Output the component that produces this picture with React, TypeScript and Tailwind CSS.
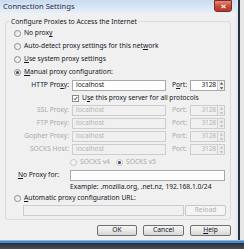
import React from 'react'

const txt = 'text-[#141424]'
const dis = 'text-[#a8a8a8]'

function Radio({ checked = false, disabled = false }: { checked?: boolean; disabled?: boolean }) {
  return (
    <span
      className={`flex items-center justify-center w-[7px] h-[7px] rounded-full border shrink-0 ${
        disabled ? 'border-[#c4c4c4] bg-[#f4f4f4]' : 'border-[#8c8c8c] bg-gradient-to-br from-[#e4e4e4] to-[#fafafa]'
      }`}
    >
      {checked && <span className="w-[3px] h-[3px] rounded-full bg-[#2d4b6a]" />}
    </span>
  )
}

function Input({ value, disabled = false, w }: { value?: string; disabled?: boolean; w: string }) {
  return (
    <div
      className={`${w} h-[11px] border flex items-center px-[3px] ${
        disabled ? 'border-[#cdcdcd] bg-[#f0f0f0] text-[#b4b4b4]' : 'border-[#a8a8a8] bg-white ' + txt
      }`}
    >
      {value}
    </div>
  )
}

function PortInput({ disabled = false }: { disabled?: boolean }) {
  return (
    <div
      className={`w-[35px] h-[11px] border flex items-center ${
        disabled ? 'border-[#cdcdcd] bg-[#f0f0f0] text-[#b4b4b4]' : 'border-[#a8a8a8] bg-white ' + txt
      }`}
    >
      <span className="flex-1 text-right pr-[1px] tracking-[-0.2px]">3128</span>
      <div className="w-[7px] h-full flex flex-col border-l border-[#d0d0d0] bg-[#ececec]">
        <svg viewBox="0 0 6 4" className="w-[7px] h-[4.5px]">
          <path d="M1.5 3 L3 1.2 L4.5 3 Z" fill={disabled ? '#b8b8b8' : '#4a4a4a'} />
        </svg>
        <svg viewBox="0 0 6 4" className="w-[7px] h-[4.5px]">
          <path d="M1.5 1 L3 2.8 L4.5 1 Z" fill={disabled ? '#b8b8b8' : '#4a4a4a'} />
        </svg>
      </div>
    </div>
  )
}

function ProxyRow({ label, disabled }: { label: React.ReactNode; disabled?: boolean }) {
  return (
    <div className="h-[13px] flex items-center">
      <div className={`w-[63px] text-right whitespace-nowrap ${disabled ? dis : txt}`}>{label}</div>
      <div className="w-[3px]" />
      <Input w="w-[94px]" value="localhost" disabled={disabled} />
      <div className={`ml-[6px] w-[18px] ${disabled ? dis : txt}`}>
        P<span className={disabled ? '' : 'underline'}>o</span>rt:
      </div>
      <PortInput disabled={disabled} />
    </div>
  )
}

function Button({ children, disabled = false, w }: { children: React.ReactNode; disabled?: boolean; w: string }) {
  return (
    <div
      className={`${w} h-[11px] rounded-[2px] border flex items-center justify-center ${
        disabled
          ? 'border-[#c6c6c6] bg-[#f4f4f4] text-[#b0b0b0]'
          : 'border-[#707070] bg-gradient-to-b from-[#f6f6f6] via-[#e8e8e8] to-[#d6d6d6] ' + txt
      }`}
    >
      {children}
    </div>
  )
}

export default function App() {
  return (
    <div
      className="w-[244px] h-[249px] overflow-hidden flex flex-col bg-[#f0f0f0] text-[6.7px] leading-none"
      style={{ fontFamily: '"Noto Sans", "Open Sans", sans-serif' }}
    >
      <div className="flex flex-1 min-h-0">
        <div className="flex-1 flex flex-col">
          {/* title bar */}
          <div className="h-[13px] flex items-start justify-between bg-gradient-to-b from-[#c9dcf0] to-[#e6eff9]">
            <span className="pl-[3px] pt-[3px] text-[7.6px] text-[#1e2c3c]">Connection Settings</span>
            <div className="mr-[4px] w-[18px] h-[12px] rounded-b-[3px] bg-gradient-to-b from-[#e28a7a] via-[#c94b3b] to-[#b33a2c] border border-[#7a2a22] flex items-center justify-center">
              <svg viewBox="0 0 8 6" className="w-[7px] h-[5px]">
                <path d="M1.5 1 L6.5 5 M6.5 1 L1.5 5" stroke="#fff" strokeWidth="1.4" />
              </svg>
            </div>
          </div>

          <fieldset className="mt-[4px] ml-[5px] w-[226px] border border-[#d5dce3] rounded-[3px] pb-[3px]">
            <legend className={`ml-[4px] px-[1px] h-[9px] leading-[9px] ${txt}`}>
              Configure Proxies to Access the Internet
            </legend>
            <div className="pt-[1px]">
              <div className={`h-[13px] pl-[8px] flex items-center gap-[3px] ${txt}`}>
                <Radio />
                <span>
                  No prox<span className="underline">y</span>
                </span>
              </div>
              <div className={`h-[13px] pl-[8px] flex items-center gap-[3px] ${txt}`}>
                <Radio />
                <span>
                  Auto-detect proxy settings for this net<span className="underline">w</span>ork
                </span>
              </div>
              <div className={`h-[13px] pl-[8px] flex items-center gap-[3px] ${txt}`}>
                <Radio />
                <span>
                  <span className="underline">U</span>se system proxy settings
                </span>
              </div>
              <div className={`h-[13px] pl-[8px] flex items-center gap-[3px] ${txt}`}>
                <Radio checked />
                <span>
                  <span className="underline">M</span>anual proxy configuration:
                </span>
              </div>

              <ProxyRow
                label={
                  <>
                    HTTP Pro<span className="underline">x</span>y:
                  </>
                }
              />
              <div className={`h-[12px] pl-[66px] flex items-center gap-[3px] ${txt}`}>
                <span className="w-[7px] h-[7px] border border-[#8c8c8c] bg-white flex items-center justify-center">
                  <svg viewBox="0 0 6 6" className="w-[5px] h-[5px]">
                    <path d="M1 3 L2.5 4.6 L5 1.2" stroke="#2a3e6a" strokeWidth="1.2" fill="none" />
                  </svg>
                </span>
                <span>
                  U<span className="underline">s</span>e this proxy server for all protocols
                </span>
              </div>
              <ProxyRow disabled label="SSL Proxy:" />
              <ProxyRow disabled label="FTP Proxy:" />
              <ProxyRow disabled label="Gopher Proxy:" />
              <ProxyRow disabled label="SOCKS Host:" />
              <div className={`h-[13px] pl-[64px] flex items-center ${dis}`}>
                <Radio disabled />
                <span className="ml-[3px] w-[36px]">SOCKS v4</span>
                <Radio disabled checked />
                <span className="ml-[3px]">SOCKS v5</span>
              </div>

              <div className="h-[12px] flex items-center">
                <div className={`w-[53px] text-right ${txt}`}>
                  <span className="underline">N</span>o Proxy for:
                </div>
                <div className="w-[11px]" />
                <Input w="w-[155px]" />
              </div>
              <div className={`h-[12px] pl-[64px] flex items-center ${txt}`}>
                Example: .mozilla.org, .net.nz, 192.168.1.0/24
              </div>
              <div className={`h-[11px] pl-[8px] flex items-center gap-[3px] ${txt}`}>
                <Radio />
                <span>
                  <span className="underline">A</span>utomatic proxy configuration URL:
                </span>
              </div>
              <div className="h-[12px] pl-[17px] flex items-end gap-[1px]">
                <Input w="w-[161px]" disabled />
                <Button w="w-[41px]" disabled>
                  Reload
                </Button>
              </div>
            </div>
          </fieldset>

          <div className="mt-[5px] flex justify-end gap-[6px] pr-[5px]">
            <Button w="w-[40px]">OK</Button>
            <Button w="w-[41px]">Cancel</Button>
            <Button w="w-[41px]">
              <span className="underline">H</span>elp
            </Button>
          </div>
        </div>
        <div className="w-[2px] bg-[#dfe7ef]" />
        <div className="w-[2px] bg-[#26313d]" />
        <div className="w-[4px] bg-[#e6e6e6]" />
      </div>
      <div className="h-[1px] bg-[#9ab0c6]" />
      <div className="h-[2px] bg-[#3b8de0]" />
      <div className="h-[6px] bg-gradient-to-b from-[#2b2e33] to-[#4a4e55]" />
    </div>
  )
}
